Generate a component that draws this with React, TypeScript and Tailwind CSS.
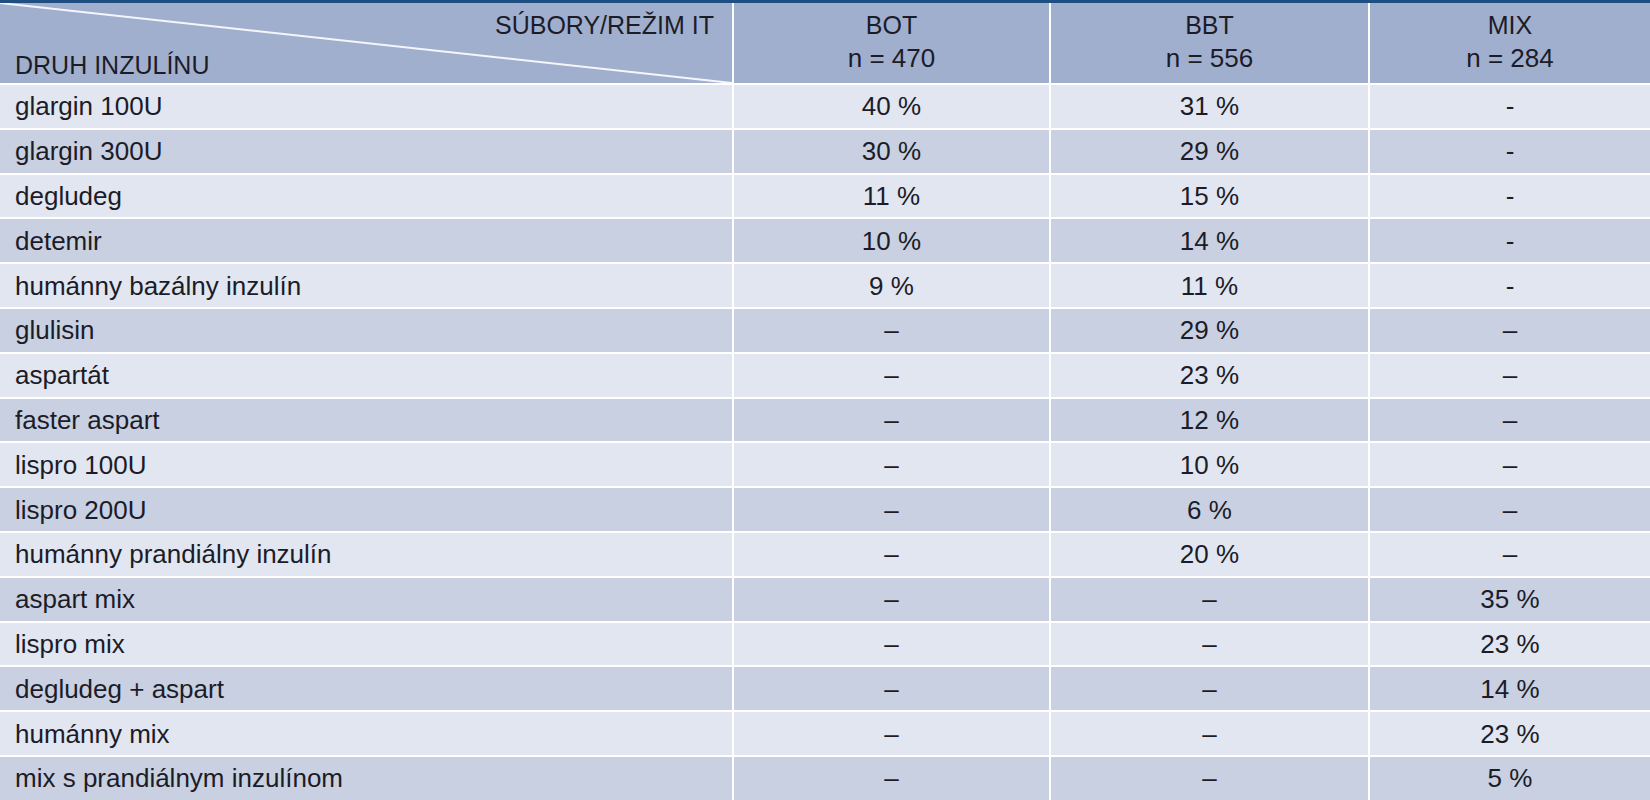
const rows: [string, string, string, string][] = [
  ['glargin 100U', '40 %', '31 %', '-'],
  ['glargin 300U', '30 %', '29 %', '-'],
  ['degludeg', '11 %', '15 %', '-'],
  ['detemir', '10 %', '14 %', '-'],
  ['humánny bazálny inzulín', '9 %', '11 %', '-'],
  ['glulisin', '–', '29 %', '–'],
  ['aspartát', '–', '23 %', '–'],
  ['faster aspart', '–', '12 %', '–'],
  ['lispro 100U', '–', '10 %', '–'],
  ['lispro 200U', '–', '6 %', '–'],
  ['humánny prandiálny inzulín', '–', '20 %', '–'],
  ['aspart mix', '–', '–', '35 %'],
  ['lispro mix', '–', '–', '23 %'],
  ['degludeg + aspart', '–', '–', '14 %'],
  ['humánny mix', '–', '–', '23 %'],
  ['mix s prandiálnym inzulínom', '–', '–', '5 %'],
];

const groups = [
  { name: 'BOT', n: 'n = 470' },
  { name: 'BBT', n: 'n = 556' },
  { name: 'MIX', n: 'n = 284' },
];

export default function App() {
  return (
    <div
      className="w-[1650px] h-[800px] overflow-hidden bg-white border-t-[3px] border-[#1f4f80] text-[#1c1c28] text-[26px]"
      style={{ fontFamily: '"Liberation Sans", Arial, sans-serif' }}
    >
      <div className="grid grid-cols-[732px_315px_317px_280px] gap-x-[2px] gap-y-[2px]">
        {/* hlavička */}
        <div className="relative h-[80px] bg-[#a1afcf] flex flex-col justify-between pt-[7px] pb-[3px] px-[15px] text-[25px] leading-[30px]">
          <svg className="absolute inset-0" width="732" height="80" viewBox="0 0 732 80">
            <line x1="0" y1="0" x2="732" y2="80" stroke="#f4f6fb" strokeWidth="2" />
          </svg>
          <div className="relative text-right pr-[3px]">SÚBORY/REŽIM IT</div>
          <div className="relative">DRUH INZULÍNU</div>
        </div>
        {groups.map(g => (
          <div key={g.name} className="h-[80px] bg-[#a1afcf] text-center pt-[5.5px] leading-[33px]">
            <div className="text-[25px]">{g.name}</div>
            <div>{g.n}</div>
          </div>
        ))}

        {/* riadky */}
        {rows.map((r, i) => {
          const bg = i % 2 === 0 ? 'bg-[#e1e6f0]' : 'bg-[#c8d0e2]';
          return [
            <div key={`${i}-a`} className={`${bg} h-[42.8px] flex items-center px-[15px] leading-[30px]`}>{r[0]}</div>,
            <div key={`${i}-b`} className={`${bg} h-[42.8px] flex items-center justify-center leading-[30px]`}>{r[1]}</div>,
            <div key={`${i}-c`} className={`${bg} h-[42.8px] flex items-center justify-center leading-[30px]`}>{r[2]}</div>,
            <div key={`${i}-d`} className={`${bg} h-[42.8px] flex items-center justify-center leading-[30px]`}>{r[3]}</div>,
          ];
        })}
      </div>
    </div>
  );
}
